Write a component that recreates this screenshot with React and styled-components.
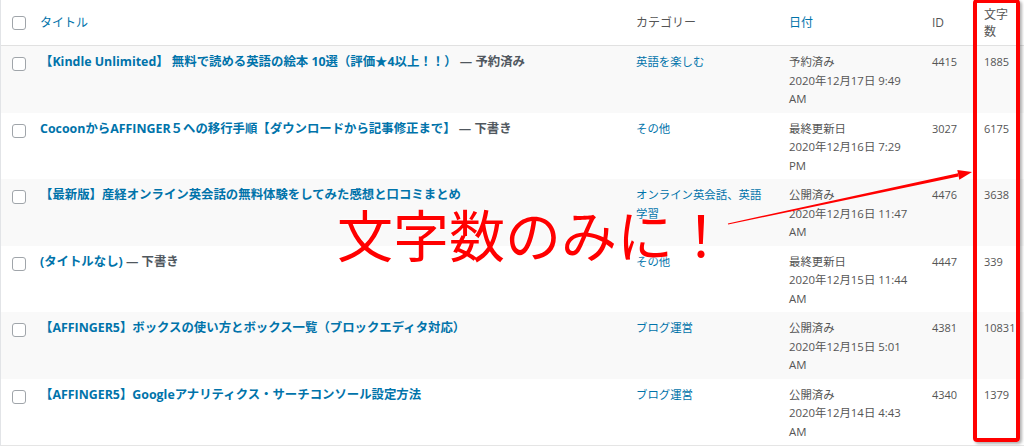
import React from "react";
import styled, { createGlobalStyle } from "styled-components";

// page basics
const GlobalStyle = createGlobalStyle`
  body {
    margin: 0;
    background: #ffffff;
    font-family: "Open Sans", "Noto Sans CJK JP", sans-serif;
  }
`;

const posts = [
  {
    title: "【Kindle Unlimited】 無料で読める英語の絵本 10選（評価★4以上！！）",
    state: "予約済み",
    category: "英語を楽しむ",
    date: ["予約済み", "2020年12月17日 9:49", "AM"],
    id: 4415,
    words: 1885,
  },
  {
    title: "CocoonからAFFINGER５への移行手順【ダウンロードから記事修正まで】",
    state: "下書き",
    category: "その他",
    date: ["最終更新日", "2020年12月16日 7:29", "PM"],
    id: 3027,
    words: 6175,
  },
  {
    title: "【最新版】産経オンライン英会話の無料体験をしてみた感想と口コミまとめ",
    category: "オンライン英会話、英語学習",
    date: ["公開済み", "2020年12月16日 11:47", "AM"],
    id: 4476,
    words: 3638,
  },
  {
    title: "(タイトルなし)",
    state: "下書き",
    category: "その他",
    date: ["最終更新日", "2020年12月15日 11:44", "AM"],
    id: 4447,
    words: 339,
  },
  {
    title: "【AFFINGER5】ボックスの使い方とボックス一覧（ブロックエディタ対応）",
    category: "ブログ運営",
    date: ["公開済み", "2020年12月15日 5:01", "AM"],
    id: 4381,
    words: 10831,
  },
  {
    title: "【AFFINGER5】Googleアナリティクス・サーチコンソール設定方法",
    category: "ブログ運営",
    date: ["公開済み", "2020年12月14日 4:43", "AM"],
    id: 4340,
    words: 1379,
  },
];

export default function App() {
  return (
    <>
      <GlobalStyle />
      <Screen>
        <Table>
          <HeadRow>
            <CheckCell>
              <Checkbox />
            </CheckCell>
            <HeadCell $link>タイトル</HeadCell>
            <HeadCell>カテゴリー</HeadCell>
            <HeadCell $link>日付</HeadCell>
            <HeadCell>ID</HeadCell>
            <HeadCell>文字数</HeadCell>
          </HeadRow>
          {posts.map((post, i) => (
            <Row key={post.id} $striped={i % 2 === 0}>
              <CheckCell>
                <Checkbox />
              </CheckCell>
              <Cell>
                <PostTitle>{post.title}</PostTitle>
                {post.state && <PostState> — {post.state}</PostState>}
              </Cell>
              <CategoryCell>
                <CategoryLink>{post.category}</CategoryLink>
              </CategoryCell>
              <Cell>
                {post.date.map((line) => (
                  <DateLine key={line}>{line}</DateLine>
                ))}
              </Cell>
              <NumberCell>{post.id}</NumberCell>
              <NumberCell>{post.words}</NumberCell>
            </Row>
          ))}
        </Table>

        {/* annotations drawn over the screenshot */}
        <Callout>文字数のみに！</Callout>
        <ArrowLayer viewBox="0 0 1024 447" width="1024" height="447">
          <polygon
            points="728.1,224.6 727.9,223.4 958,173.2 958.6,176.6"
            fill="#ff0000"
          />
          <polygon points="972,172 957.3,170 959.3,179.8" fill="#ff0000" />
        </ArrowLayer>
        <Highlight />
      </Screen>
    </>
  );
}

const columns = "31px 596px 153px 143px 52px 48px";

const Screen = styled.div`
  position: relative;
  width: 1024px;
  height: 447px;
  overflow: hidden;
  background: #ffffff;
`;

const Table = styled.div`
  border-left: 1px solid #e2e4e7;
  border-bottom: 1px solid #e5e5e5;
  width: 1023px;
`;

const HeadRow = styled.div`
  display: grid;
  grid-template-columns: ${columns};
  align-items: center;
  height: 45px;
  border-bottom: 1px solid #e1e1e1;
`;

const HeadCell = styled.div`
  padding: 0 8px;
  font-size: 12px;
  line-height: 17px;
  color: ${(p) => (p.$link ? "#0073aa" : "#555555")};
`;

const Row = styled.div`
  display: grid;
  grid-template-columns: ${columns};
  align-items: start;
  background: ${(p) => (p.$striped ? "#f9f9f9" : "#ffffff")};
`;

const Cell = styled.div`
  padding: 7px 8px 4px;
  font-size: 11.4px;
  line-height: 18.5px;
  color: #555555;
  white-space: nowrap;
`;

const NumberCell = styled(Cell)`
  font-size: 11px;
`;

const CategoryCell = styled(Cell)`
  padding-right: 15px;
  white-space: normal;
`;

const CheckCell = styled.div`
  display: flex;
  justify-content: flex-end;
  ${Row} & {
    padding-top: 11px;
  }
`;

const Checkbox = styled.span`
  display: block;
  width: 14px;
  height: 14px;
  box-sizing: border-box;
  border: 1px solid #a0a5aa;
  border-radius: 3px;
  background: #ffffff;
  margin-right: 6px;
`;

const PostTitle = styled.span`
  font-size: 12.4px;
  font-weight: 700;
  color: #0073aa;
`;

const PostState = styled.span`
  font-size: 12.4px;
  font-weight: 700;
  color: #50575e;
`;

const CategoryLink = styled.span`
  color: #0073aa;
`;

const DateLine = styled.span`
  display: block;
`;

const Callout = styled.div`
  position: absolute;
  left: 337px;
  top: 205px;
  font-family: "Noto Sans CJK JP", sans-serif;
  font-size: 56px;
  line-height: 1;
  color: #ff0000;
  white-space: nowrap;
  text-shadow: 0 0 2px #ffffff, 0 0 4px rgba(255, 255, 255, 0.8);
`;

const ArrowLayer = styled.svg`
  position: absolute;
  left: 0;
  top: 0;
  pointer-events: none;
`;

const Highlight = styled.div`
  position: absolute;
  left: 973px;
  top: -1px;
  width: 47px;
  height: 443px;
  box-sizing: border-box;
  border: 4px solid #ff0000;
  border-radius: 4px;
  box-shadow: 2px 2px 3px rgba(0, 0, 0, 0.3);
`;
